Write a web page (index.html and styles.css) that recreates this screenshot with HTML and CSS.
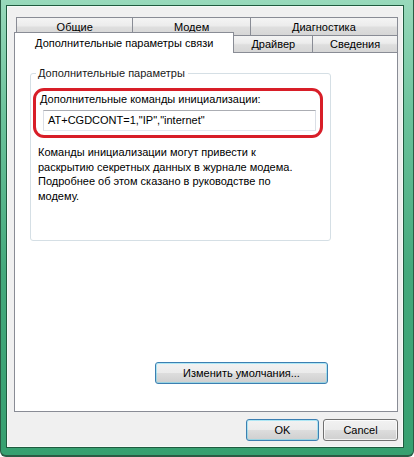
FILE: index.html
```html
<!DOCTYPE html>
<html lang="ru">
<head>
<meta charset="utf-8">
<title>Свойства модема</title>
<link rel="stylesheet" href="styles.css">
</head>
<body>
<div class="window">
  <div class="client">
    <div class="tabs">
      <div class="tab-row row-back">
        <div class="tab t-general">Общие</div>
        <div class="tab t-modem">Модем</div>
        <div class="tab t-diag">Диагностика</div>
      </div>
      <div class="tab-row row-front">
        <div class="tab tab-active t-adv">Дополнительные параметры связи</div>
        <div class="tab t-driver">Драйвер</div>
        <div class="tab t-info">Сведения</div>
      </div>
    </div>
    <div class="panel">
      <fieldset class="group">
        <legend class="group-title">Дополнительные параметры</legend>
        <div class="highlight">
          <div class="field-label">Дополнительные команды инициализации:</div>
          <div class="textbox">AT+CGDCONT=1,"IP","internet"</div>
        </div>
        <p class="note">Команды инициализации могут привести к<br>раскрытию секретных данных в журнале модема.<br>Подробнее об этом сказано в руководстве по<br>модему.</p>
      </fieldset>
      <div class="panel-actions">
        <button class="btn btn-blue btn-wide">Изменить умолчания...</button>
      </div>
    </div>
    <div class="dialog-buttons">
      <button class="btn btn-blue btn-ok">OK</button>
      <button class="btn btn-cancel">Cancel</button>
    </div>
  </div>
</div>
</body>
</html>
```
FILE: styles.css
```css
html, body {
  margin: 0;
  padding: 0;
  background: #ffffff;
}
body {
  font-family: "Liberation Sans", Arial, sans-serif;
  font-size: 11px;
  color: #000;
}
.window {
  width: 414px;
  height: 457px;
  box-sizing: border-box;
  border-left: 1px solid #2a5c45;
  border-right: 1px solid #2a5c45;
  border-bottom: 2px solid #2a5c45;
  border-radius: 0 0 6px 6px;
  padding: 5px 9px 7px 5px;
  background: linear-gradient(to bottom, #98d9bb 0%, #6cc39c 25%, #44a97c 60%, #36a070 100%);
}
.client {
  height: 443px;
  box-sizing: border-box;
  border: 1px solid #1f5a3f;
  box-shadow: inset 0 0 0 1px #f4fbf7;
  background: #f0f0f0;
  padding: 11px 5px 0 7px;
  display: flex;
  flex-direction: column;
}
.tabs {
  display: flex;
  flex-direction: column;
}
.tab-row {
  display: flex;
  align-items: flex-end;
}
.row-back {
  height: 18px;
  margin-left: 2px;
}
.row-front {
  height: 17px;
  position: relative;
  z-index: 2;
}
.tab {
  box-sizing: border-box;
  border: 1px solid #898c95;
  border-bottom: none;
  background: linear-gradient(to bottom, #f4f4f4 0%, #ececec 45%, #dedede 55%, #d6d6d6 100%);
  text-align: center;
  line-height: 15px;
  color: #000;
}
.row-back .tab {
  height: 18px;
  line-height: 18px;
}
.row-back .tab + .tab,
.row-front .tab + .tab {
  margin-left: -1px;
}
.t-general { width: 118px; }
.t-modem { width: 119px; }
.t-diag { width: 149px; }
.row-front .tab {
  height: 17px;
  line-height: 17px;
}
.row-front .tab.tab-active {
  height: 21px;
  line-height: 21px;
  margin-bottom: -1px;
  background: #ffffff;
  position: relative;
  z-index: 3;
}
.t-adv { width: 221px; }
.t-driver { width: 80px; }
.t-info { width: 86px; }

.panel {
  height: 360px;
  box-sizing: border-box;
  border: 1px solid #898c95;
  background: #ffffff;
  padding: 13px 0 0 15px;
  display: flex;
  flex-direction: column;
  align-items: flex-start;
}
.group {
  margin: 0;
  width: 301px;
  height: 175px;
  box-sizing: border-box;
  border: 1px solid #d5dfe5;
  border-radius: 3px;
  padding: 0 0 0 2px;
  min-inline-size: 0;
}
.group-title {
  margin-left: 3px;
  padding: 0 3px 0 2px;
  line-height: 14px;
  color: #1a1a1a;
}
.highlight {
  width: 290px;
  box-sizing: border-box;
  margin-top: 8px;
  border: 3px solid #d81e28;
  border-radius: 11px;
  padding: 0 4px 4px 4px;
}
.field-label {
  line-height: 16px;
}
.textbox {
  margin: 3px 0 0 3px;
  height: 21px;
  box-sizing: border-box;
  border: 1px solid #abadb3;
  border-left-color: #dbdfe6;
  border-right-color: #dbdfe6;
  border-bottom-color: #e3e9ef;
  background: #fff;
  padding-left: 4px;
  line-height: 19px;
}
.note {
  margin: 7px 0 0 5px;
  line-height: 14.5px;
}
.panel-actions {
  margin: 121px 0 0 125px;
}
.btn {
  font-family: inherit;
  font-size: 11px;
  color: #000;
  box-sizing: border-box;
  height: 22px;
  border: 1px solid #707070;
  border-radius: 3px;
  padding: 0;
  background: linear-gradient(to bottom, #f2f2f2 0%, #ebebeb 50%, #dddddd 51%, #cfcfcf 100%);
  box-shadow: inset 0 0 0 1px rgba(255,255,255,0.75);
}
.btn-blue {
  border-color: #3c7fb1;
  box-shadow: inset 0 0 0 1px #48d8fb66;
}
.btn-wide {
  width: 173px;
}
.dialog-buttons {
  display: flex;
  justify-content: flex-end;
  gap: 4px;
  margin-top: 7px;
  padding-right: 0;
}
.btn-ok { width: 73px; }
.btn-cancel { width: 75px; }
```
